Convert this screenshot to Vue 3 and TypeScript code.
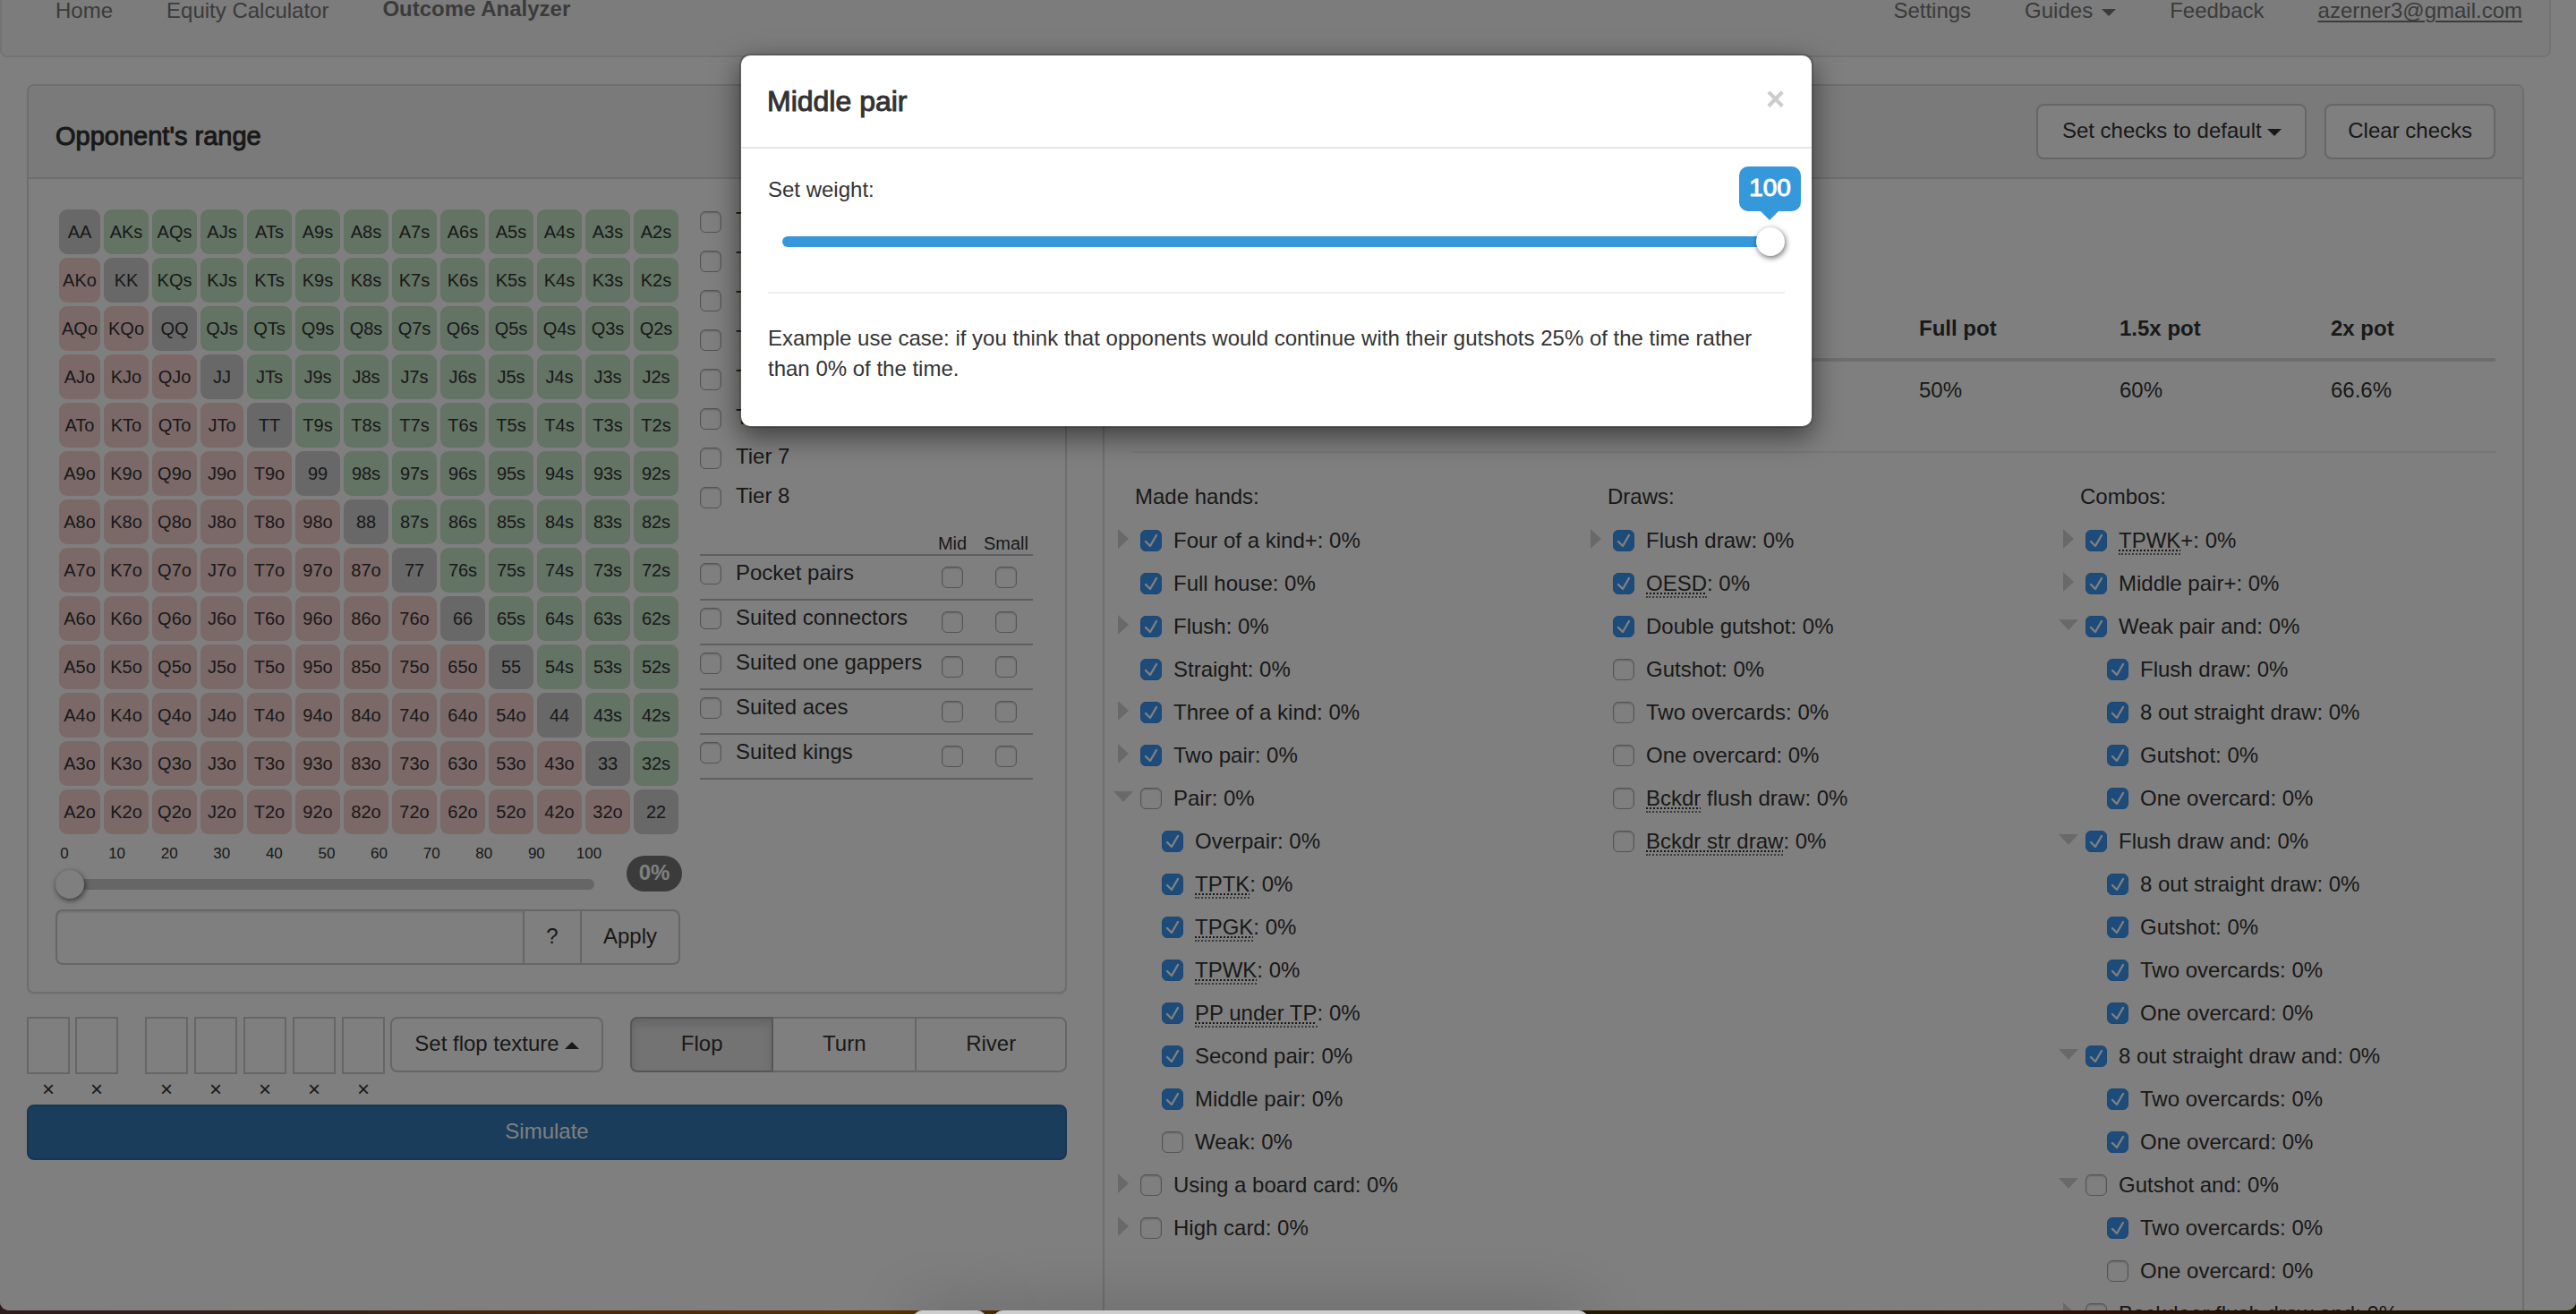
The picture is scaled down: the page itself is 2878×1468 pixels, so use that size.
<script setup lang="ts">
import { ref } from 'vue'

interface HandRow {
  id: string
  label: string
  abbr?: string
  checked: boolean
  child?: boolean
  arrow?: 'right' | 'down'
}

interface HandGroup {
  title: string
  rows: HandRow[]
}

const ranks = ['A', 'K', 'Q', 'J', 'T', '9', '8', '7', '6', '5', '4', '3', '2']

const cells = ranks.flatMap((row, r) =>
  ranks.map((col, c) => {
    if (r === c) return { name: row + col, kind: 'pair' }
    return c > r ? { name: row + col + 's', kind: 'suited' } : { name: col + row + 'o', kind: 'offsuit' }
  }),
)

const ticks = [0, 10, 20, 30, 40, 50, 60, 70, 80, 90, 100]
const tiers = [1, 2, 3, 4, 5, 6, 7, 8]
const families = ['Pocket pairs', 'Suited connectors', 'Suited one gappers', 'Suited aces', 'Suited kings']
const holeCards = [1, 2]
const boardCards = [1, 2, 3, 4, 5]
const streets = ['Flop', 'Turn', 'River']
const street = ref('Flop')
const rangePercent = ref(0)
const weight = ref(100)
const rangeText = ref('')

/* Row notation: ">" collapsed, "v" expanded, "-" child; "x" ticked; [..] marks an abbreviation. */
function rows(prefix: string, source: string[]): HandRow[] {
  return source.map((line, i) => {
    const flags = line.slice(0, 2)
    const text = line.slice(3)
    const match = /^\[(.+)\](.*)$/.exec(text)
    return {
      id: `${prefix}-${i}`,
      label: match ? match[2] : text,
      abbr: match ? match[1] : undefined,
      checked: flags[1] === 'x',
      child: flags[0] === '-',
      arrow: flags[0] === '>' ? 'right' : flags[0] === 'v' ? 'down' : undefined,
    }
  })
}

const groups = ref<HandGroup[]>([
  {
    title: 'Made hands:',
    rows: rows('made', [
      '>x Four of a kind+',
      ' x Full house',
      '>x Flush',
      ' x Straight',
      '>x Three of a kind',
      '>x Two pair',
      'v  Pair',
      '-x Overpair',
      '-x [TPTK]',
      '-x [TPGK]',
      '-x [TPWK]',
      '-x [PP under TP]',
      '-x Second pair',
      '-x Middle pair',
      '-  Weak',
      '>  Using a board card',
      '>  High card',
    ]),
  },
  {
    title: 'Draws:',
    rows: rows('draws', [
      '>x Flush draw',
      ' x [OESD]',
      ' x Double gutshot',
      '   Gutshot',
      '   Two overcards',
      '   One overcard',
      '   [Bckdr] flush draw',
      '   [Bckdr str draw]',
    ]),
  },
  {
    title: 'Combos:',
    rows: rows('combos', [
      '>x [TPWK]+',
      '>x Middle pair+',
      'vx Weak pair and',
      '-x Flush draw',
      '-x 8 out straight draw',
      '-x Gutshot',
      '-x One overcard',
      'vx Flush draw and',
      '-x 8 out straight draw',
      '-x Gutshot',
      '-x Two overcards',
      '-x One overcard',
      'vx 8 out straight draw and',
      '-x Two overcards',
      '-x One overcard',
      'v  Gutshot and',
      '-x Two overcards',
      '-  One overcard',
      '>  Backdoor flush draw and',
    ]),
  },
])
</script>

<template>
  <div class="desktop">
    <div class="window">
      <div class="page">
        <nav class="navbar">
          <div class="nav-links">
            <a href="#home">Home</a>
            <a href="#equity">Equity Calculator</a>
            <a href="#outcome" class="current">Outcome Analyzer</a>
          </div>
          <div class="nav-links">
            <a href="#settings">Settings</a>
            <a href="#guides" class="with-caret">Guides <span class="caret"></span></a>
            <a href="#feedback">Feedback</a>
            <a href="#account" class="account">azerner3@gmail.com</a>
          </div>
        </nav>

        <main class="columns">
          <div class="left">
            <section class="panel">
              <header class="panel-heading titled"><h3>Opponent's range</h3></header>
              <div class="range-body">
                <div class="range-main">
                  <div class="hand-grid">
                    <button v-for="cell in cells" :key="cell.name" type="button" class="hand" :class="cell.kind">{{ cell.name }}</button>
                  </div>
                  <div class="percent-row">
                    <div class="percent-slider">
                      <div class="ticks"><span v-for="tick in ticks" :key="tick">{{ tick }}</span></div>
                      <input v-model.number="rangePercent" class="slider" type="range" min="0" max="100" aria-label="Range percent" />
                    </div>
                    <span class="badge">{{ rangePercent }}%</span>
                  </div>
                  <div class="input-group">
                    <input v-model="rangeText" type="text" aria-label="Range" />
                    <button type="button" class="btn help">?</button>
                    <button type="button" class="btn apply">Apply</button>
                  </div>
                </div>
                <div class="range-side">
                  <div v-for="tier in tiers" :key="tier" class="tier">
                    <input :id="`tier-${tier}`" type="checkbox" />
                    <label :for="`tier-${tier}`">Tier {{ tier }}</label>
                  </div>
                  <table class="families">
                    <thead>
                      <tr><th></th><th class="narrow">Mid</th><th class="narrow">Small</th></tr>
                    </thead>
                    <tbody>
                      <tr v-for="(family, i) in families" :key="family">
                        <td>
                          <div class="family">
                            <input :id="`family-${i}`" type="checkbox" />
                            <label :for="`family-${i}`">{{ family }}</label>
                          </div>
                        </td>
                        <td class="narrow"><input type="checkbox" :aria-label="`${family}, mid`" /></td>
                        <td class="narrow"><input type="checkbox" :aria-label="`${family}, small`" /></td>
                      </tr>
                    </tbody>
                  </table>
                </div>
              </div>
            </section>

            <div class="board-row">
              <div class="cards hole">
                <div v-for="n in holeCards" :key="n" class="slot">
                  <button type="button" class="card" :aria-label="`Hole card ${n}`"></button>
                  <button type="button" class="clear">×</button>
                </div>
              </div>
              <div class="cards board">
                <div v-for="n in boardCards" :key="n" class="slot">
                  <button type="button" class="card" :aria-label="`Board card ${n}`"></button>
                  <button type="button" class="clear">×</button>
                </div>
              </div>
              <button type="button" class="btn texture">Set flop texture<span class="caret up"></span></button>
              <div class="btn-group">
                <button v-for="s in streets" :key="s" type="button" class="btn" :class="{ active: street === s }" @click="street = s">{{ s }}</button>
              </div>
            </div>
            <button type="button" class="btn simulate">Simulate</button>
          </div>

          <section class="panel right">
            <header class="panel-heading">
              <button type="button" class="btn defaults">Set checks to default<span class="caret"></span></button>
              <button type="button" class="btn">Clear checks</button>
            </header>
            <div class="analysis">
              <table class="pots">
                <thead>
                  <tr><th></th><th class="pot-a">Full pot</th><th class="pot-b">1.5x pot</th><th class="pot-c">2x pot</th></tr>
                </thead>
                <tbody>
                  <tr><td></td><td>50%</td><td>60%</td><td>66.6%</td></tr>
                </tbody>
              </table>
              <hr />
              <div class="groups">
                <div v-for="group in groups" :key="group.title" class="group">
                  <div class="group-title">{{ group.title }}</div>
                  <div v-for="row in group.rows" :key="row.id" class="row" :class="{ child: row.child }">
                    <span class="toggle">
                      <svg v-if="row.arrow === 'right'" width="12" height="22" viewBox="0 0 12 22"><path d="M0 0 12 11 0 22z" fill="#d2d2d2" /></svg>
                      <svg v-else-if="row.arrow === 'down'" width="22" height="12" viewBox="0 0 22 12"><path d="M0 0H22L11 12z" fill="#d2d2d2" /></svg>
                    </span>
                    <input :id="row.id" v-model="row.checked" type="checkbox" />
                    <label :for="row.id"><abbr v-if="row.abbr">{{ row.abbr }}</abbr>{{ row.label }}: 0%</label>
                  </div>
                </div>
              </div>
            </div>
          </section>
        </main>
      </div>

      <div class="backdrop">
        <div class="modal" role="dialog" aria-labelledby="weight-title">
          <header class="modal-header">
            <h4 id="weight-title">Middle pair</h4>
            <button type="button" class="close" aria-label="Close">×</button>
          </header>
          <div class="modal-body">
            <label for="weight">Set weight:</label>
            <div class="weight">
              <output for="weight" class="tip">{{ weight }}</output>
              <input id="weight" v-model.number="weight" class="slider filled" type="range" min="0" max="100" />
            </div>
            <hr />
            <p>Example use case: if you think that opponents would continue with their gutshots 25% of the time rather than 0% of the time.</p>
          </div>
        </div>
      </div>
    </div>
    <div class="dock">
      <span class="dock-item small"></span>
      <span class="dock-item large"></span>
    </div>
  </div>
</template>

<style>
body {
  margin: 0;
}
</style>

<style scoped>
* {
  box-sizing: border-box;
}
.desktop {
  position: relative;
  display: flex;
  flex-direction: column;
  height: 100vh;
  overflow: hidden;
  background: linear-gradient(90deg, #2c1c1b 0%, #33201c 12%, #4a2808 22%, #5a3200 34%, #3c2600 48%, #1c1400 68%, #2a0e02 80%, #141400 100%);
  color: #333;
  font: 24px/34px "Liberation Sans", Arial, sans-serif;
}
.window {
  position: relative;
  flex: 1;
  min-height: 0;
  margin-bottom: 4px;
  overflow: hidden;
  background: #fff;
  border-radius: 0 0 10px 10px;
}
.page {
  padding-right: 28px;
}
button,
input {
  font: inherit;
  color: inherit;
  margin: 0;
}
h3,
h4,
p {
  margin: 0;
}

/* Navigation */
.navbar {
  display: flex;
  justify-content: space-between;
  height: 64px;
  padding: 0 30px 0 60px;
  background: #f8f8f8;
  border: 2px solid #e7e7e7;
  border-top: 0;
  border-radius: 0 0 8px 8px;
}
.nav-links {
  display: flex;
  align-items: flex-start;
  gap: 60px;
  line-height: 24px;
}
.nav-links a {
  color: #777;
  text-decoration: none;
}
.nav-links .current {
  font-weight: bold;
  line-height: 19px;
}
.nav-links .account {
  text-decoration: underline;
  text-decoration-thickness: 2px;
  text-underline-offset: 3px;
}
.with-caret {
  display: flex;
  align-items: center;
  gap: 10px;
}
.caret {
  display: inline-block;
  margin-left: 6px;
  vertical-align: middle;
  border: 8px solid transparent;
  border-top-color: currentColor;
  border-bottom: 0;
}
.with-caret .caret {
  margin: 4px 0 0;
}
.caret.up {
  border-top: 0;
  border-bottom: 8px solid currentColor;
}

/* Panels */
.columns {
  display: grid;
  grid-template-columns: minmax(0, 1162fr) minmax(0, 1588fr);
  gap: 40px;
  padding: 30px 30px 0;
}
.panel {
  background: #fff;
  border: 2px solid #ddd;
  border-radius: 8px;
  box-shadow: 0 2px 2px rgba(0, 0, 0, 0.05);
}
.panel-heading {
  display: flex;
  align-items: center;
  justify-content: flex-end;
  gap: 20px;
  height: 104px;
  padding: 0 30px;
  background: #f5f5f5;
  border-bottom: 2px solid #ddd;
  border-radius: 6px 6px 0 0;
}
.panel-heading.titled {
  justify-content: flex-start;
  padding-top: 10px;
}
.panel-heading h3 {
  font-size: 29px;
  font-weight: normal;
  -webkit-text-stroke: 1px currentColor;
}
.btn {
  height: 62px;
  padding: 0 24px 2px;
  background: #fff;
  border: 2px solid #ccc;
  border-radius: 8px;
  white-space: nowrap;
}
.defaults {
  width: 302px;
}

/* Range editor */
.range-body {
  display: flex;
  gap: 22px;
  padding: 34px 36px 30px 30px;
}
.range-main {
  flex: none;
  width: 698px;
}
.hand-grid {
  display: grid;
  grid-template-columns: 46px 50px 50px 48px repeat(9, 50px);
  grid-auto-rows: 50px;
  gap: 4px;
  margin-left: 4px;
}
.hand {
  padding: 0;
  border: 0;
  border-radius: 9px;
  font-size: 20px;
}
.pair {
  background: #d0d0d0;
}
.suited {
  background: #c6e6c8;
}
.offsuit {
  background: #f6d2d0;
}
.percent-row {
  display: flex;
  justify-content: space-between;
  padding: 10px 0 12px;
}
.percent-slider {
  width: 602px;
}
.ticks {
  display: flex;
  justify-content: space-between;
  margin: 0 -9px 6px -5px;
  font-size: 17px;
  line-height: 24px;
}
.ticks span {
  width: 30px;
  text-align: center;
}
.slider {
  display: block;
  width: 100%;
  height: 32px;
  appearance: none;
  background: transparent;
}
.slider::-webkit-slider-runnable-track {
  height: 12px;
  background: #ccc;
  border-radius: 6px;
}
.slider.filled::-webkit-slider-runnable-track {
  background: #3498db;
}
.slider::-webkit-slider-thumb {
  appearance: none;
  width: 32px;
  height: 32px;
  margin-top: -10px;
  background: #fff;
  border-radius: 50%;
  box-shadow: 1px 2px 6px rgba(0, 0, 0, 0.6);
}
.badge {
  width: 62px;
  height: 40px;
  margin: 14px -2px 0 0;
  background: #777;
  border-radius: 20px;
  color: #fff;
  font-weight: bold;
  line-height: 38px;
  text-align: center;
}
.input-group {
  display: flex;
}
.input-group input {
  flex: 1;
  min-width: 0;
  height: 62px;
  padding: 0 24px;
  background: #fff;
  border: 2px solid #ccc;
  border-right: 0;
  border-radius: 8px 0 0 8px;
  box-shadow: inset 0 2px 2px rgba(0, 0, 0, 0.075);
}
.help {
  width: 66px;
  padding: 0 0 2px;
  border-radius: 0;
}
.apply {
  width: 112px;
  margin-left: -2px;
  padding: 0 0 2px;
  border-radius: 0 8px 8px 0;
}
.range-side {
  flex: 1;
  min-width: 0;
}
input[type='checkbox'] {
  flex: none;
  width: 24px;
  height: 24px;
  appearance: none;
  background: #fff;
  border: 1px solid #a8a8a8;
  border-radius: 6px;
  box-shadow: inset 0 1px 2px rgba(0, 0, 0, 0.25);
}
input[type='checkbox']:checked {
  background: #3b97f4 url("data:image/svg+xml,%3Csvg xmlns='http://www.w3.org/2000/svg' viewBox='0 0 24 24'%3E%3Cpath d='M6 13l5 5 7-12' fill='none' stroke='%23fff' stroke-width='2.4' stroke-linecap='round' stroke-linejoin='round'/%3E%3C/svg%3E") center / 24px 24px;
  border-color: #3a8fe6;
  box-shadow: none;
}
.tier,
.family {
  display: flex;
  align-items: flex-start;
  gap: 16px;
}
.tier {
  height: 44px;
}
.tier input {
  margin-top: 2px;
}
.tier label {
  line-height: 24px;
}
.families {
  width: 100%;
  border-collapse: collapse;
}
.families tr {
  border-bottom: 2px solid #bebebe;
}
.families th {
  height: 34px;
  padding: 8px 0 0;
  font-size: 20px;
  font-weight: normal;
  line-height: 24px;
}
.families td {
  height: 50px;
  padding: 8px 0 0;
  vertical-align: top;
}
.families .narrow {
  width: 60px;
  text-align: center;
}
.families td.narrow {
  padding-top: 12px;
}
.families .narrow input {
  display: block;
  margin: 0 auto;
}
.family label {
  line-height: 22px;
  white-space: nowrap;
}

/* Board and street selection */
.board-row {
  display: flex;
  height: 98px;
  margin-top: 26px;
}
.cards {
  display: flex;
}
.hole {
  gap: 6px;
  margin-right: 30px;
}
.board {
  gap: 7px;
}
.slot {
  display: flex;
  flex-direction: column;
  width: 48px;
}
.card {
  height: 64px;
  background: #fff;
  border: 2px solid #ccc;
}
.clear {
  height: 34px;
  padding: 0;
  background: none;
  border: 0;
}
.texture {
  width: 238px;
  margin: 0 30px 0 6px;
}
.btn-group {
  display: flex;
  flex: 1;
}
.btn-group .btn {
  flex: 1 1 auto;
  border-radius: 0;
}
.btn-group .btn + .btn {
  margin-left: -2px;
}
.btn-group .btn:first-child {
  border-radius: 8px 0 0 8px;
}
.btn-group .btn:last-child {
  border-radius: 0 8px 8px 0;
}
.btn-group .btn.active {
  position: relative;
  background: #e6e6e6;
  border-color: #adadad;
  box-shadow: inset 0 6px 10px rgba(0, 0, 0, 0.125);
}
.simulate {
  display: block;
  width: 100%;
  background: #337ab7;
  border-color: #2e6da4;
  color: #fff;
}

/* Outcome panel */
.analysis {
  padding: 134px 30px 0;
}
.pots {
  width: 100%;
  border-collapse: collapse;
  table-layout: fixed;
}
.pots th {
  padding: 16px;
  border-bottom: 4px solid #ddd;
  text-align: left;
}
.pots td {
  padding: 15px 16px 17px;
}
.pot-a {
  width: 224px;
}
.pot-b {
  width: 236px;
}
.pot-c {
  width: 200px;
}
hr {
  height: 2px;
  margin: 34px 0 33px;
  background: #eee;
  border: 0;
}
.groups {
  display: grid;
  grid-template-columns: repeat(3, minmax(0, 1fr));
  margin: 0 -36px 0 -24px;
}
.group-title {
  padding-left: 28px;
  line-height: 32px;
  padding-bottom: 2px;
}
.row {
  display: flex;
  align-items: center;
  height: 34px;
  margin-top: 14px;
}
.toggle {
  display: flex;
  justify-content: center;
  width: 22px;
  margin: 0 8px 4px 4px;
}
.child .toggle {
  margin-right: 32px;
}
.row label {
  padding: 0 0 1px 13px;
}
abbr {
  padding-bottom: 1px;
  border-bottom: 2px dotted #777;
  text-decoration: underline dotted 2px;
  text-underline-offset: 3px;
}

/* Modal */
.backdrop {
  position: absolute;
  inset: 0;
  padding: 60px 26px 0 0;
  background: rgba(0, 0, 0, 0.5);
}
.modal {
  width: 1200px;
  max-width: 100%;
  margin: 0 auto;
  background: #fff;
  background-clip: padding-box;
  border: 2px solid rgba(0, 0, 0, 0.2);
  border-radius: 12px;
  box-shadow: 0 10px 30px rgba(0, 0, 0, 0.5);
}
.modal-header {
  display: flex;
  align-items: center;
  justify-content: space-between;
  height: 104px;
  padding: 0 30px 0 29px;
  border-bottom: 2px solid #e5e5e5;
}
.modal-header h4 {
  font-size: 32px;
  font-weight: normal;
  -webkit-text-stroke: 1px currentColor;
}
.close {
  padding: 0 0 4px;
  background: none;
  border: 0;
  color: #ccc;
  font-size: 36px;
  font-weight: bold;
}
.modal-body {
  padding: 29px 30px 47px;
}
.modal-body label {
  display: block;
}
.weight {
  position: relative;
  margin: 25px 0 40px 16px;
}
.tip {
  position: absolute;
  top: -68px;
  right: -18px;
  width: 69px;
  height: 50px;
  background: #3498db;
  border-radius: 10px;
  color: #fff;
  font-size: 28px;
  line-height: 48px;
  text-align: center;
  -webkit-text-stroke: 1px currentColor;
}
.tip::after {
  content: '';
  position: absolute;
  top: 50px;
  left: 24px;
  border: 10px solid transparent;
  border-top-color: #3498db;
  border-bottom: 0;
}

/* Dock peeking over the bottom of the window */
.dock {
  position: absolute;
  right: 0;
  bottom: 0;
  left: 0;
  display: flex;
  gap: 8px;
  height: 4px;
  padding-left: 1020px;
}
.dock-item {
  height: 40px;
  background: #cfcfcf;
  border-radius: 10px;
  box-shadow: 0 0 70px rgba(0, 0, 0, 0.22);
}
.dock-item.small {
  width: 82px;
}
.dock-item.large {
  width: 664px;
}
</style>
